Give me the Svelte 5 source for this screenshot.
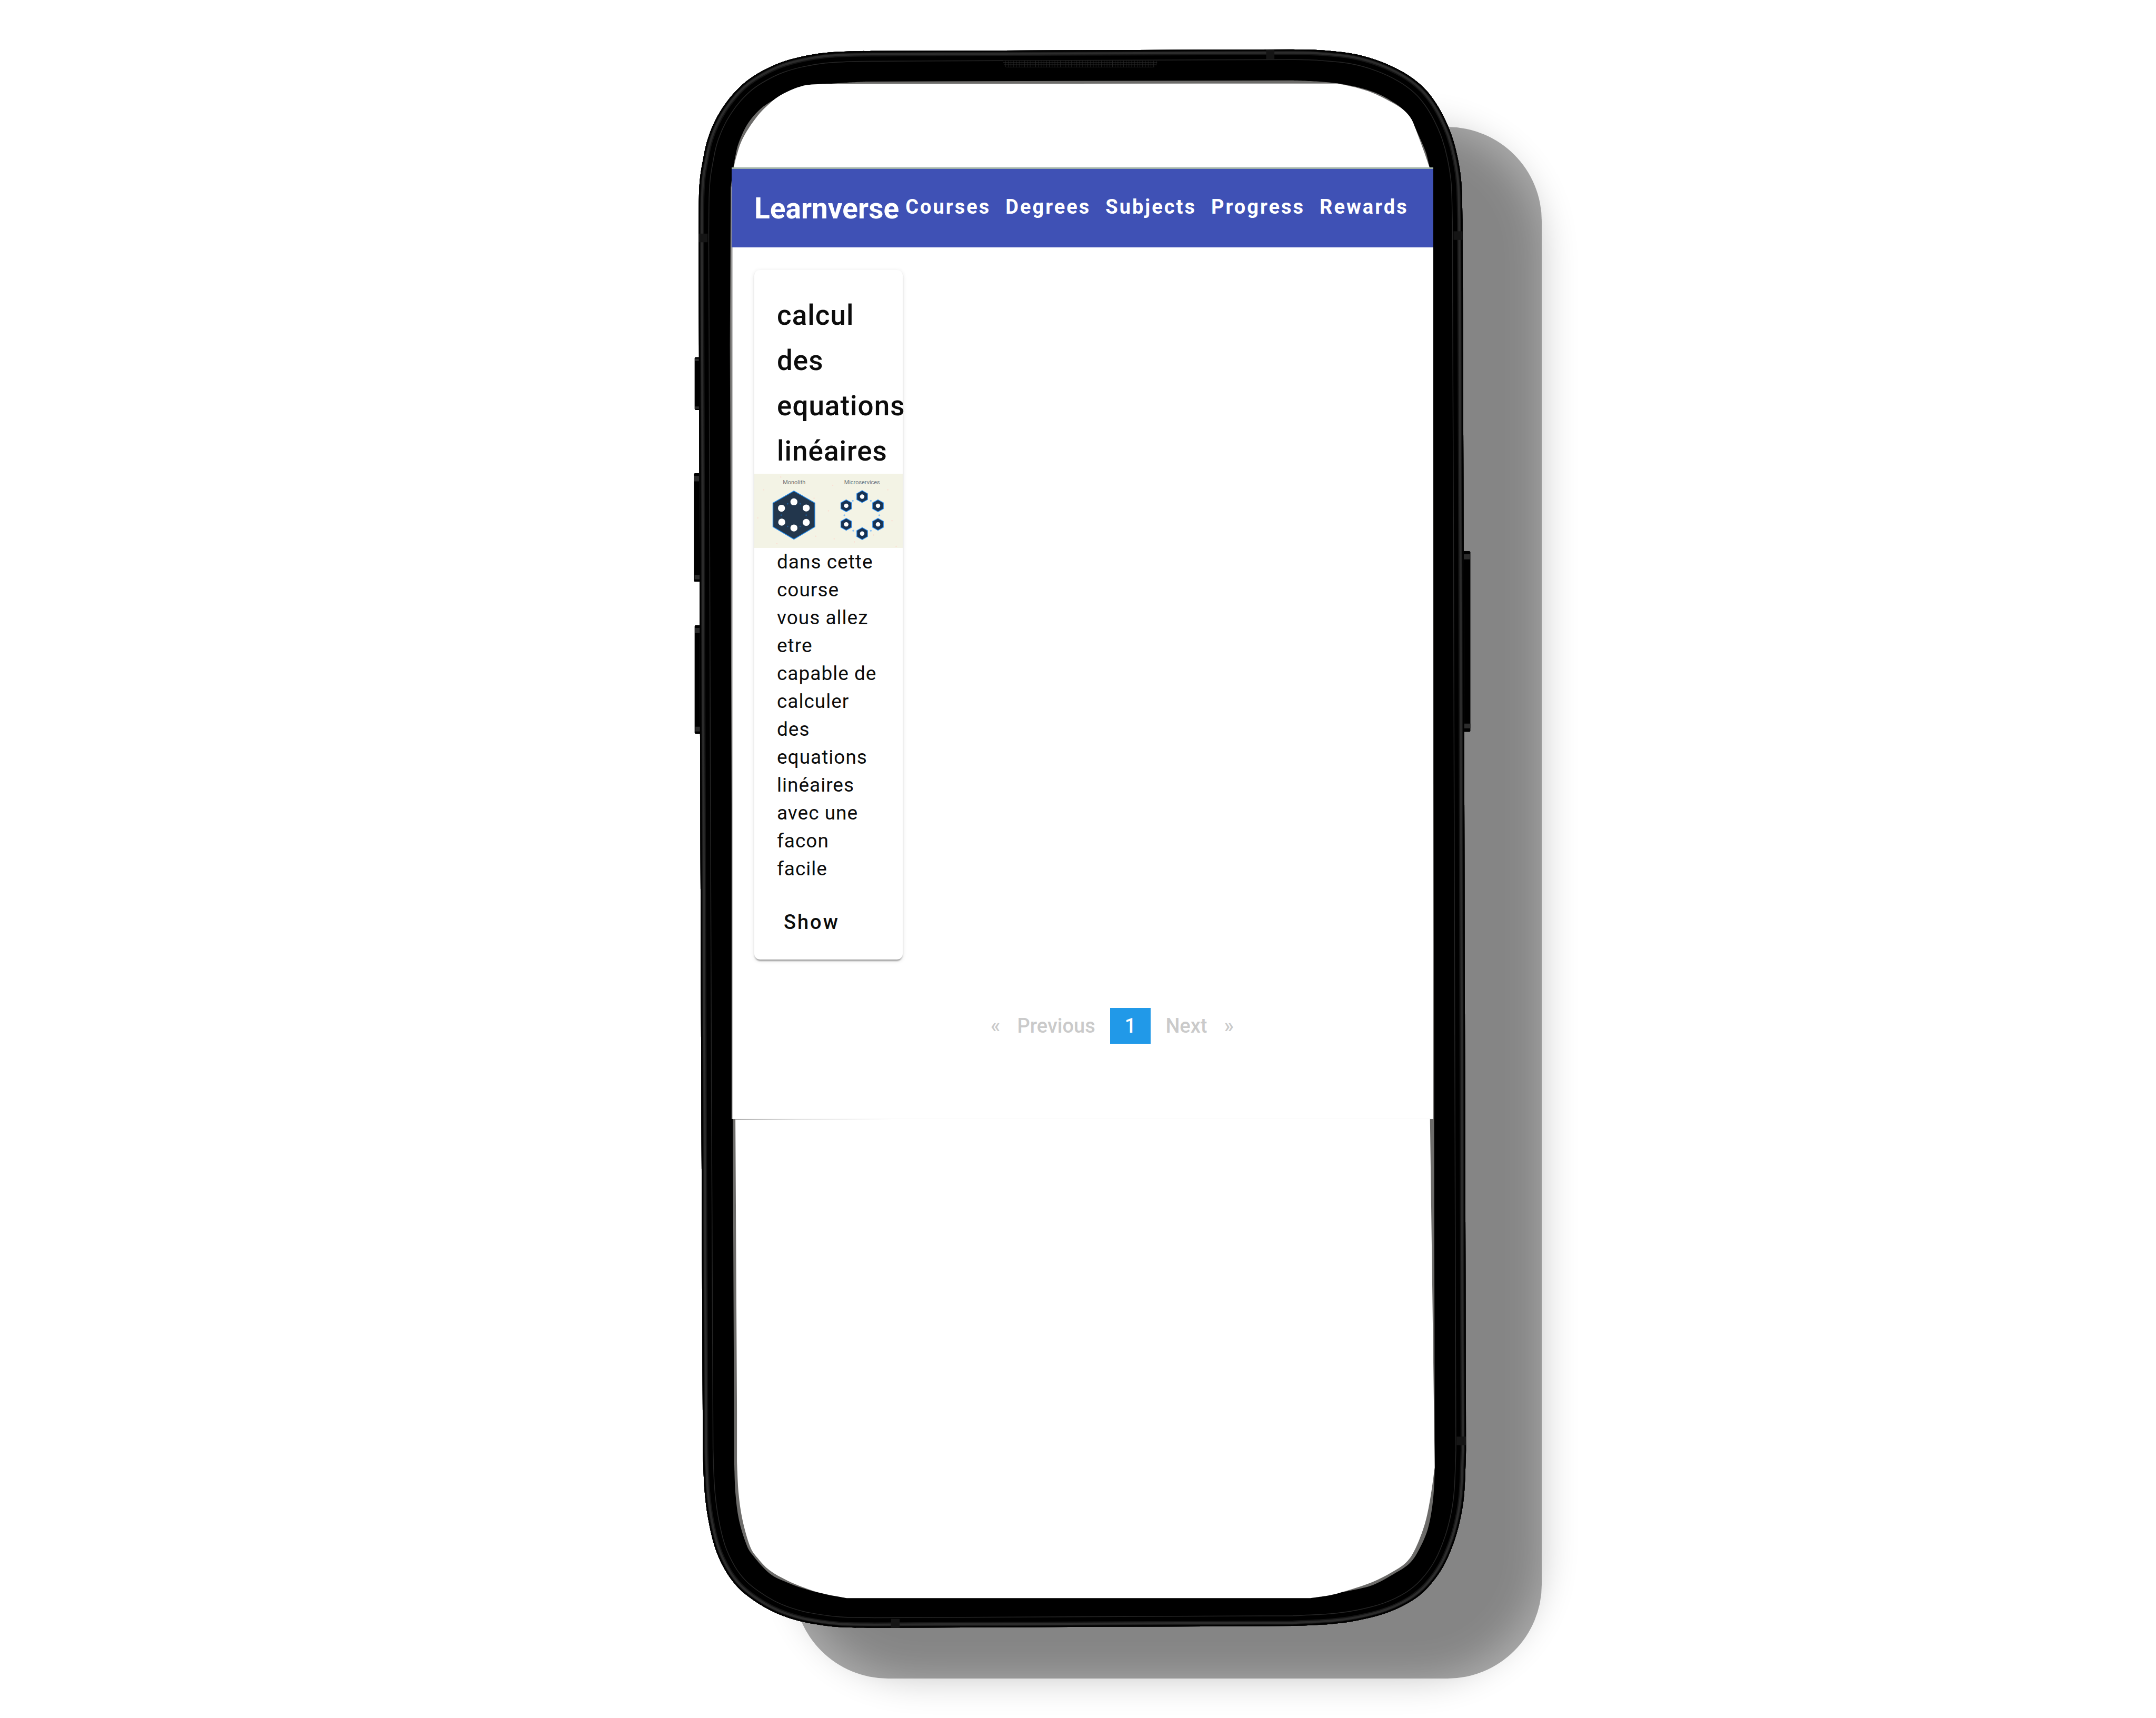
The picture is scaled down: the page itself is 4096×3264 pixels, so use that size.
<script>
  const links = ['Courses', 'Degrees', 'Subjects', 'Progress', 'Rewards'];

  const course = {
    title: 'calcul des equations linéaires',
    text: 'dans cette course vous allez etre capable de calculer des equations linéaires avec une facon facile'
  };

  const bigHexDots = [[378, 300], [472, 347], [472, 457], [378, 500], [285, 455], [283, 349]];
  const bigHexLinks = [[330, 315], [426, 315], [472, 402], [426, 488], [330, 488], [281, 402]];
  const services = [[900, 260], [1021, 330], [1021, 472], [900, 543], [778, 472], [778, 330]];
  const serviceLinks = [[828, 292], [966, 292], [1031, 403], [966, 521], [832, 521], [764, 403]];
  const specks = [
    [277, 110], [147, 208], [675, 174], [1096, 208], [532, 272], [642, 369], [102, 423],
    [1128, 444], [545, 563], [686, 583], [248, 620], [840, 606], [1160, 640], [988, 554]
  ];

  // Each outline is a list of curved runs; straight lines join one run to the next.
  const shell = outline([
    [[1782, 600], [1783, 503], [1786, 453], [1793, 410], [1803, 363], [1820, 317], [1842, 277], [1870, 240], [1903, 208], [1943, 182], [1990, 160], [2043, 145], [2103, 135], [2170, 131], [2240, 130]],
    [[3290, 126], [3366, 128], [3450, 137], [3519, 156], [3581, 185], [3626, 218], [3657, 254], [3682, 296], [3703, 345], [3718, 400], [3728, 466], [3731, 560]],
    [[3734, 1400]],
    [[3739, 3380]],
    [[3740, 3700], [3736, 3800], [3728, 3862], [3711, 3928], [3683, 3994], [3644, 4048], [3601, 4084], [3539, 4114], [3467, 4133], [3396, 4143], [3300, 4148]],
    [[2231, 4153], [2142, 4151], [2061, 4140], [2008, 4126], [1963, 4107], [1919, 4080], [1883, 4050], [1852, 4009], [1825, 3951], [1807, 3877], [1797, 3798], [1793, 3700]],
    [[1789, 2780]],
    [[1786, 1930]],
    [[1783, 880]]
  ]);

  const opening = outline([
    [[1864, 480], [1871, 427], [1877, 393], [1885, 363], [1903, 323], [1923, 295], [1947, 272], [1970, 257]],
    [[2017, 230], [2053, 218], [2113, 214], [2153, 211], [2210, 208]],
    [[3297, 205], [3366, 208], [3420, 214], [3473, 225], [3519, 241], [3558, 263], [3581, 281], [3600, 303], [3611, 328]],
    [[3623, 354], [3638, 390], [3647, 428]],
    [[3656, 432]],
    [[3657, 2000]],
    [[3660, 3720], [3659, 3780], [3654, 3841], [3642, 3902], [3620, 3953], [3596, 3988], [3558, 4014], [3501, 4044], [3429, 4061]],
    [[2106, 4067], [2061, 4056], [2008, 4037], [1963, 4014], [1919, 3966], [1903, 3937], [1885, 3877], [1876, 3808], [1873, 3729]],
    [[1869, 2780]],
    [[1866, 1930]],
    [[1862, 880]]
  ]);

  const glass = outline([
    [[1866, 480], [1872, 427], [1882, 387], [1893, 357], [1910, 327], [1933, 295], [1957, 270], [1983, 248], [2017, 230], [2053, 218], [2087, 215], [2113, 214]],
    [[3412, 213], [3458, 223], [3504, 238], [3550, 261], [3581, 281], [3600, 303], [3611, 328]],
    [[3634, 390]],
    [[3647, 428]],
    [[3648, 2854]],
    [[3660, 3744], [3649, 3821], [3635, 3887], [3611, 3950], [3587, 3986], [3549, 4012], [3501, 4036], [3443, 4056], [3396, 4069], [3343, 4077]],
    [[2160, 4077], [2106, 4067], [2061, 4054], [2008, 4032], [1963, 4006], [1932, 3974], [1913, 3944], [1894, 3877], [1884, 3808], [1880, 3729]],
    [[1880, 3600]],
    [[1876, 2854]],
    [[1868, 2800]]
  ]);

  function outline(runs) {
    let d = '';
    runs.forEach((pts, r) => {
      d += `${r ? 'L' : 'M'}${pts[0]}`;
      for (let i = 0; i < pts.length - 1; i++) {
        const a = pts[Math.max(i - 1, 0)];
        const b = pts[i];
        const c = pts[i + 1];
        const e = pts[Math.min(i + 2, pts.length - 1)];
        d += `C${b[0] + (c[0] - a[0]) / 6} ${b[1] + (c[1] - a[1]) / 6} ${c[0] - (e[0] - b[0]) / 6} ${c[1] - (e[1] - b[1]) / 6} ${c}`;
      }
    });
    return d + 'Z';
  }

  function hexagon(cx, cy, rx, ry) {
    const h = ry / 2;
    return [
      [cx, cy - ry], [cx + rx, cy - h], [cx + rx, cy + h],
      [cx, cy + ry], [cx - rx, cy + h], [cx - rx, cy - h]
    ].map((p) => p.join(',')).join(' ');
  }
</script>

<main class="scene">
  <svg class="phone" viewBox="0 0 5500 4383" aria-hidden="true">
    <defs>
      <clipPath id="shell-clip"><path d={shell} /></clipPath>
      <filter id="soft" x="-20%" y="-20%" width="140%" height="140%">
        <feGaussianBlur stdDeviation="48" />
      </filter>
      <pattern id="mesh" width="7" height="6" patternUnits="userSpaceOnUse">
        <rect width="7" height="6" fill="#000" />
        <path d="M0 3H7M3 0V6" stroke="#2a2a2a" stroke-width="1" />
      </pattern>
      <linearGradient id="edge" x1="0" x2="1" y1="0" y2="0">
        <stop offset="0" stop-color="#444" />
        <stop offset="0.4" stop-color="#bbb" />
        <stop offset="1" stop-color="#fff" />
      </linearGradient>
    </defs>

    <rect x="2025" y="324" width="1908" height="3958" rx="320" fill="#000" opacity="0.22" filter="url(#soft)" />
    <rect x="2025" y="324" width="1908" height="3958" rx="240" fill="#000" opacity="0.33" />

    <g fill="#000">
      <rect x="1772" y="911" width="16" height="135" rx="3" />
      <rect x="1770" y="1207" width="20" height="277" rx="3" />
      <rect x="1772" y="1595" width="20" height="277" rx="3" />
      <rect x="3728" y="1406" width="23" height="461" rx="3" />
    </g>
    <g fill="#2c2c2c">
      <rect x="1773" y="915" width="10" height="6" />
      <rect x="1773" y="1037" width="10" height="6" />
      <rect x="1771" y="1214" width="14" height="14" />
      <rect x="1772" y="1467" width="14" height="11" />
      <rect x="1773" y="1602" width="14" height="13" />
      <rect x="1774" y="1854" width="13" height="12" />
      <rect x="3734" y="1414" width="16" height="13" />
      <rect x="3735" y="1846" width="16" height="12" />
    </g>

    <path d={shell} fill="#000" />
    <g clip-path="url(#shell-clip)" fill="none">
      <path d={shell} stroke="#262626" stroke-width="54" />
      <path d={shell} stroke="#000" stroke-width="50" />
      <path d={shell} stroke="#151515" stroke-width="28" />
      <path d={shell} stroke="#2b2b2b" stroke-width="22" />
      <path d={shell} stroke="#141414" stroke-width="11" />
      <path d={shell} stroke="#000" stroke-width="7" />
      <g fill="#151515">
        <rect x="1780" y="596" width="25" height="22" />
        <rect x="3230" y="124" width="21" height="27" />
        <rect x="3708" y="590" width="25" height="22" />
        <rect x="3716" y="3665" width="25" height="22" />
        <rect x="2273" y="4130" width="22" height="25" />
      </g>
    </g>
    <path d="M2558 155H2953L2950 166Q2948 172 2940 172H2570Q2562 172 2561 166Z" fill="url(#mesh)" />

    <path d={opening} fill="#6d6c6a" />
    <path d={glass} fill="#fff" />
    <rect x="1876" y="2855" width="400" height="1" fill="url(#edge)" />
  </svg>

  <section class="app">
    <header class="toolbar">
      <h1 class="brand">Learnverse</h1>
      <nav class="nav">
        {#each links as link}
          <a href="#{link.toLowerCase()}">{link}</a>
        {/each}
      </nav>
    </header>

    <div class="courses">
      <article class="card">
        <h2 class="title">{course.title}</h2>
        <svg class="cover" viewBox="75 85 1135 568" role="img" aria-label="Monolith and microservices">
          <rect x="75" y="85" width="1135" height="568" fill="#f3f3e5" />
          {#each specks as [x, y]}
            <circle cx={x} cy={y} r="5" fill="#fbdfd3" />
          {/each}
          <text x="380" y="164" class="label">Monolith</text>
          <text x="899" y="164" class="label">Microservices</text>
          <polygon points="378,217 538,309 538,491 378,586 218,491 218,309" fill="#22364c" stroke="#1f86e6" stroke-width="6" />
          {#each bigHexLinks as [x, y]}
            <circle cx={x} cy={y} r="6" fill="#1c5790" />
          {/each}
          {#each bigHexDots as [x, y]}
            <circle cx={x} cy={y} r="27" fill="#fff" />
          {/each}
          {#each serviceLinks as [x, y]}
            <circle cx={x} cy={y} r="7" fill="#8cc2f4" />
          {/each}
          {#each services as [x, y]}
            <polygon points={hexagon(x, y, 41, 46)} fill="#173253" stroke="#2a8df2" stroke-width="5" />
            <circle cx={x} cy={y} r="17" fill="#fff" />
          {/each}
        </svg>
        <p class="text">{course.text}</p>
        <div class="actions">
          <button class="show" type="button">Show</button>
        </div>
      </article>
    </div>

    <nav class="pagination" aria-label="Pagination">
      <button class="step" type="button" disabled><span>«</span><span>Previous</span></button>
      <button class="page" type="button" aria-current="page">1</button>
      <button class="step" type="button" disabled><span>Next</span><span>»</span></button>
    </nav>
  </section>
</main>

<style>
  :global(body) {
    margin: 0;
    background: #fff;
  }

  .scene {
    display: grid;
    grid-template-columns: 1390fr 1333fr 1373fr;
    grid-template-rows: 318px auto 1fr;
    font-family: Roboto, 'Liberation Sans', sans-serif;
    color: #0c0c0c;
  }

  .phone {
    grid-column: 1 / -1;
    grid-row: 1 / -1;
    display: block;
    width: 100%;
    height: auto;
  }

  .app {
    grid-column: 2;
    grid-row: 2;
    min-width: 0;
    box-sizing: border-box;
    background: #fff;
    box-shadow: inset 2px 0 1px #bdbdbd;
    padding-bottom: 143px;
  }

  .toolbar {
    display: flex;
    align-items: center;
    height: 149px;
    padding: 0 43px;
    border-top: 3px solid #9fb1a8;
    background: #3f51b5;
    color: #fff;
  }

  .brand {
    margin: 0;
    font-size: 55px;
    line-height: 86px;
    font-weight: 700;
  }

  .nav {
    display: flex;
    gap: 28px;
    margin-left: 12px;
    padding-bottom: 6px;
  }

  .nav a {
    color: inherit;
    text-decoration: none;
    font-size: 38px;
    line-height: 54px;
    font-weight: 700;
    letter-spacing: 3px;
  }

  .courses {
    display: grid;
    grid-template-columns: repeat(auto-fill, 282px);
    gap: 43px;
    padding: 43px;
  }

  .card {
    padding-top: 43px;
    border-radius: 11px;
    background: #fff;
    box-shadow:
      0 5px 3px -3px rgba(0, 0, 0, 0.3),
      0 3px 3px rgba(0, 0, 0, 0.14),
      0 2px 8px rgba(0, 0, 0, 0.12);
  }

  .title {
    margin: 0;
    padding: 0 43px;
    font-size: 53px;
    line-height: 86px;
    font-weight: 500;
    letter-spacing: 1px;
  }

  .cover {
    display: block;
    width: 100%;
    height: auto;
  }

  .label {
    font-size: 44px;
    text-anchor: middle;
    fill: #6b747c;
  }

  .text {
    margin: 0;
    padding: 0 43px;
    font-size: 37px;
    line-height: 53px;
    letter-spacing: 1px;
  }

  .actions {
    padding: 32px 43px 28px;
  }

  .show {
    padding: 16px 13px;
    border: 0;
    background: none;
    color: inherit;
    font: 500 38px/54px Roboto, 'Liberation Sans', sans-serif;
    letter-spacing: 3px;
  }

  .pagination {
    display: flex;
    justify-content: center;
    padding: 49px 0 0 113px;
  }

  .pagination button {
    border: 0;
    background: none;
    font: 500 38px/54px Roboto, 'Liberation Sans', sans-serif;
    padding: 7px 28px;
  }

  .pagination .step {
    display: flex;
    gap: 32px;
    color: #cacaca;
  }

  .pagination .page {
    background: #2199e8;
    color: #fff;
  }
</style>
